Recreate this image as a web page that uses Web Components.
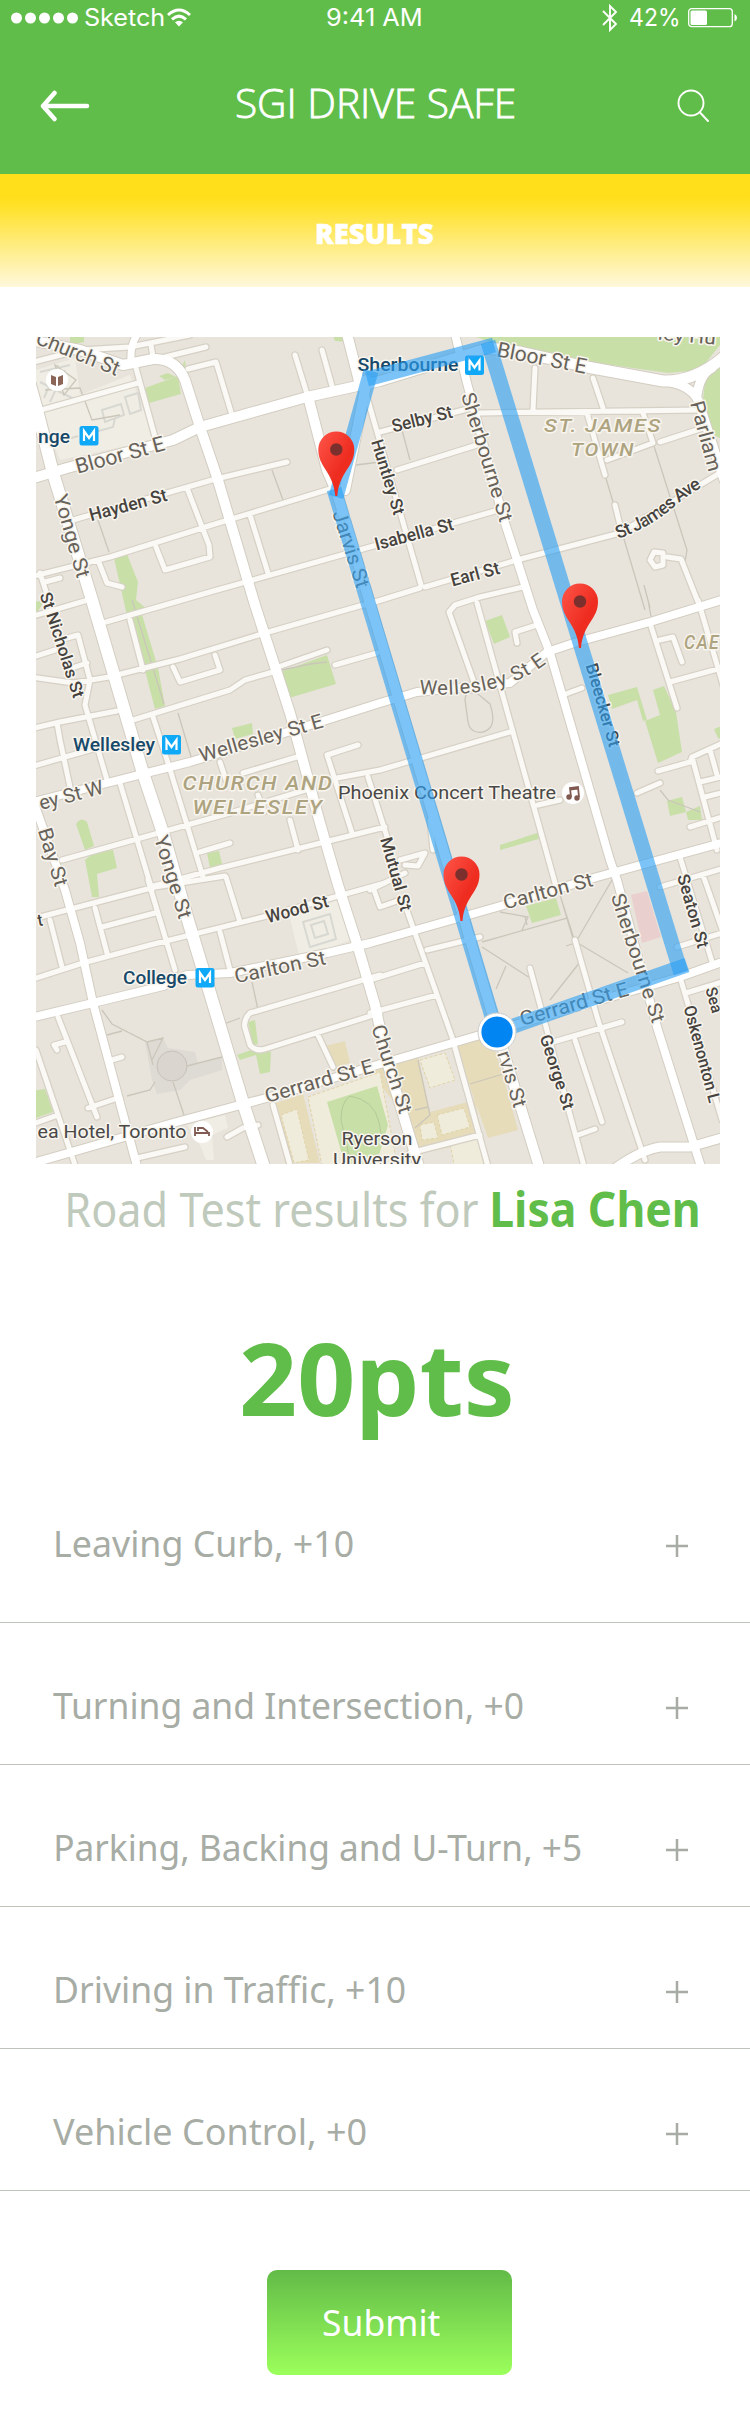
<!DOCTYPE html>
<html lang="en">
<head>
<meta charset="utf-8">
<title>SGI Drive Safe</title>
<style>
  html, body { margin: 0; background: #fff; }
  body { font-family: "Noto Sans", "Open Sans", sans-serif; }
</style>
</head>
<body>
<results-page></results-page>
<script>
const define = (name, html, after) => customElements.define(name, class extends HTMLElement {
  connectedCallback() {
    if (this.shadowRoot) return;
    this.attachShadow({ mode: 'open' }).innerHTML = html;
    if (after) after.call(this, this.shadowRoot);
  }
});

/* A single line of text condensed or expanded to an exact ink width. */
define('fit-text', `<style>
  :host { display: block; white-space: nowrap; flex: none; }
  span { display: inline-block; transform-origin: 0 50%; }
</style><span><slot></slot></span>`, function (root) {
  const w = +this.getAttribute('w');
  const c = document.createElement('canvas').getContext('2d');
  c.font = getComputedStyle(this).font;
  const m = c.measureText(this.textContent);
  const s = w / (m.actualBoundingBoxLeft + m.actualBoundingBoxRight);
  this.style.width = w + 'px';
  root.querySelector('span').style.transform =
    `translateX(${m.actualBoundingBoxLeft * s}px) scaleX(${s})`;
});

define('status-bar', `<style>
  :host { display: flex; height: 36px; align-items: center; padding: 0 13px 0 11px; box-sizing: border-box;
    font: 400 24px/36px Inter, sans-serif; color: #fff; }
  div { display: flex; align-items: center; flex: 1; }
  .r { justify-content: flex-end; }
  svg { display: block; flex: none; }
</style>
<div>
  <svg width="67" height="36" fill="#fff"><circle cx="5.5" cy="18" r="5.5"/><circle cx="19.5" cy="18" r="5.5"/><circle cx="33.5" cy="18" r="5.5"/><circle cx="47.5" cy="18" r="5.5"/><circle cx="61.5" cy="18" r="5.5"/></svg>
  <fit-text w="79" style="margin-left:7px">Sketch</fit-text>
  <svg width="24" height="36" viewBox="0 0 24 36" style="margin-left:3px" fill="none" stroke="#fff" stroke-width="3"><path d="M1 15Q12 5 23 15M5 19.300Q12 13 19 19.300"/><path d="M8 22.300Q12 19 16 22.300L12 26.500Z" fill="#fff" stroke="none"/></svg>
</div>
<fit-text w="94">9:41 AM</fit-text>
<div class="r">
  <svg width="16" height="28" viewBox="0 0 16 28" fill="none" stroke="#fff" stroke-width="1.900"><path d="M1 7L14 20L8 26V2L14 8L1 21"/></svg>
  <fit-text w="48" style="margin:0 10px 0 12px">42%</fit-text>
  <svg width="49" height="20" viewBox="0 0 49 20"><rect x=".7" y=".7" width="43.600" height="18" rx="3" fill="none" stroke="#fff" stroke-width="1.300"/><rect x="2.500" y="2.500" width="16.500" height="14.500" rx="1.500" fill="#fff"/><path d="M46.500 6Q49 7 49 9.700T46.500 13.500Z" fill="#fff"/></svg>
</div>`);

define('app-header', `<style>
  :host { display: block; height: 174px; background: #61bd49; color: #fff; }
  nav { display: grid; grid-template-columns: 1fr auto 1fr; align-items: center; height: 136px; padding: 0 40px; }
  fit-text { font: 300 40px/60px "Open Sans", sans-serif; -webkit-text-stroke: .8px #fff; margin-top: -3px; }
  svg { display: block; fill: none; stroke: #fff; stroke-linecap: round; stroke-linejoin: round; }
  .s { justify-self: end; margin: 2px 1px 0 0; }
</style>
<status-bar></status-bar>
<nav>
  <svg width="50" height="32" viewBox="0 0 50 32" stroke-width="4.500" style="margin-top:3px"><path d="M47 16H3M14.500 3L3 16L14.500 29"/></svg>
  <fit-text w="277">SGI DRIVE SAFE</fit-text>
  <svg class="s" width="32" height="33" viewBox="0 0 32 33" stroke-width="1.900"><circle cx="14" cy="14" r="12.500"/><path d="M23 23.500L31 32"/></svg>
</nav>`);

define('result-banner', `<style>
  :host { display: flex; height: 113px; justify-content: center; align-items: center; box-sizing: border-box; padding-top: 4px;
    background: linear-gradient(#ffdf1b 0%, #ffdf1b 20%, #ffe128 28%, #fff8dc 100%);
    font: 800 29px/36px "Open Sans", sans-serif; color: #fff; }
  fit-text { -webkit-text-stroke: .5px #fff; }
</style><fit-text w="116">RESULTS</fit-text>`);

/* ---------- street map ---------- */
const MAJOR = [
  [12, 'M30 385L37 410L53 473L92 600L142 770L163 833L187 917L210 993L243 1103L265 1170'],
  [10, 'M30 340L80 350L123 365L153 359Q176 358 185 380L200 427L217 477L255 605L290 713L320 823L338 885L358 947L375 1005L387 1062L420 1170'],
  [10, 'M30 479L67 468L173 440L200 427L307 397L380 381L488 348'],
  [11, 'M488 348L520 352L587 367L663 381Q695 382 725 356'],
  [9, 'M663 381Q690 384 698 400L724 480M697 395Q700 374 712 368'],
  [10, 'M346 330L360 385M309 400L327 470L337 493L497 1030L540 1170M367 380L345 490'],
  [8, 'M454 330L467 383L503 517L517 560L533 610L550 653L610 860L617 880L657 1027L702 1170'],
  [8, 'M30 803L107 783L190 762L320 722L380 703L417 692L510 683L547 652L577 642L650 622L725 599'],
  [8, 'M30 1018L93 1003L163 986L187 975L230 973L327 953L370 943L497 907L597 877L725 842'],
  [8, 'M30 1164L173 1123L270 1097L370 1067L480 1035L680 977L725 961'],
  [8, 'M33 800L65 890L80 943L93 1003L138 1170'],
  [9, 'M610 1172Q640 1150 660 1147L690 1147L725 1137'],
  [7, 'M131 362Q130 345 137 335']
];
const MINOR = 'M30 363L80 350L130 347L190 335M153 357L151 345M165 357L206 347M30 413L138 383M136 368L155 437M188 369L216 362L231 412M295 355L307 394M322 350L332 386M73 520L212 480L287 462M187 488L209 545L210 557L165 570L156 547M30 577L110 557L215 524L330 489M250 515L268 573M106 622L210 592L377 545L495 511M98 560L107 583L122 587M40 573L52 610M45 582L60 578M30 617L88 600M130 620L143 670M30 677L73 683L109 677L180 659L265 633L363 605M173 667L180 682L220 670L215 655M278 667L327 650M335 665L377 653M30 729L60 722L117 711M133 720L230 690L245 680L273 672M30 658L55 650M60 640L78 635L90 680L85 705L107 780M72 668L87 663M57 723L60 740L70 787M30 767L97 748M153 717L168 763L203 877M120 783L152 890M62 860L180 827L230 813L312 788M200 852L230 843M150 887L220 868L385 827M243 773L297 757M220 762L226 780M290 820L298 850M258 795L264 812M358 745L327 755L352 833M337 778L380 770L510 732M368 777L388 840M226 877L240 922M475 685L449 612L455 605L480 597L523 587M477 603L557 890M537 625L515 632L517 643M563 695L582 688M538 805L560 800M650 623L677 708M660 640L673 637L682 662M670 682L725 667M698 600L725 692M658 771L690 762L692 757L725 742M637 793L660 783M692 757L717 850M710 750L717 775M700 782L725 776M705 797L725 792M690 827L725 816M370 890L405 873M680 857L713 965M660 887L725 868M703 875L725 938M405 905L452 1037L489 1170M427 950L480 937M370 980L425 963M370 1013L437 995M530 968L585 1170M578 1135L595 1129M553 1042L622 1022M575 1040L602 1122M598 1020L645 1160M598 1020L575 940M680 977L722 1120M686 993L725 981M677 947L725 932M410 1153L480 1135M480 413L700 410M535 368L533 410M593 378L603 408M587 413L605 475M643 413L653 443L607 460M660 442L703 428M615 505L622 533M365 605L420 588M425 587L517 560L620 533L720 473M380 432L475 407M397 470L477 445M365 390L421 585M667 557L681 559L700 607M663 553L654 552L650 560L655 567L663 565ZM40 917L155 887L225 876M30 980L83 963L150 945L263 917L385 883M50 920L62 967M95 908L107 953M102 927L155 913M148 880L175 970M220 932L230 970M380 975L250 1013Q243 1020 245 1028L250 1045Q256 1052 265 1049L380 1013M317 1033L333 1067M58 1017L97 1117M65 1042L54 1045L57 1050M88 1108L118 1098M112 1060L122 1057M36 1050L75 1165M30 1125L58 1115M227 1137L243 1128L258 1125M137 1158L185 1147M273 1105L290 1165M374 890L380 907L400 900M430 820L433 850M400 860L425 853L418 866L405 865';
const PATHS = 'M272 470L283 500M98 520L109 552M402 430L410 460M356 465L380 462M605 475L645 610M653 443L687 550L685 562M178 713L192 760M465 700Q465 690 478 694L490 704Q498 728 483 732Q470 734 468 722ZM102 1010L112 1024L147 1042L153 1065M147 1042L163 1038L152 1060M107 1035L122 1031M187 1066L222 1057M173 1082L184 1115M155 1082L150 1090L127 1096M252 982L258 1010M224 1024L240 1018M482 942L567 918L585 975M482 947L530 978M506 966L496 989M560 895L592 995L600 1020M550 1000L580 962L563 905M576 942L628 973M577 940L612 880M566 946L578 942M500 912L528 917L522 930M525 917L527 925M650 608L644 585M652 622L648 600M660 790L668 800L700 812M132 600L152 665L164 704M282 670L310 664L327 662M418 1060L430 1115L415 1128M470 1084L503 1074M415 1110L428 1107M45 390L80 388L92 420L120 415M55 365L76 380L64 395Z';
const PARKS = ['84 330 84 342 70 345 70 330', '145 388 178 376 181 394 149 403', '159 376 168 373 176 377 165 380', '114 558 127 554 138 582 136 600 148 610 128 620', '130 610 140 608 158 668 165 706 155 709 150 690', '280 672 327 655 336 684 289 698', '232 728 252 723 253 734 235 739', '94 852 113 850 117 868 97 874 99 897 92 897 85 860', '207 853 219 851 223 868 211 873', '485 621 502 615 510 637 494 644', '608 695 637 687 647 720 643 721 637 700 612 709', '653 690 664 686 676 712 682 752 658 763 645 721 660 715', '500 845 540 832 542 838 500 850', '667 801 682 797 686 812 700 806 702 820 688 820 686 812 670 816', '526 906 556 898 561 915 532 923', '248 1022 255 1020 258 1044 253 1045', '237 1055 257 1048 271 1052 270 1072 260 1074 256 1055 240 1060', '30 1091 45 1089 53 1112 36 1118', '455 330 720 330 720 345 700 370 668 373 590 362 500 345', '705 380 720 365 720 438 713 435 703 400', '714 729 722 726 722 739 718 738', '30 603 45 600 36 614', '331 330 357 330 348 342 335 341', '185 360 186 370 182 366'];
const M = '#67625a', D = '#46433f', A = '#ada380', B = '#17496a', P = '#4a4847';
/* text, centre x, centre y, angle, length, size, colour */
const LABELS = [
  ['Church St', 78, 353, 22, 88, 21, M], ['Bloor St E', 120, 455, -15, 92, 21, M], ['Hayden St', 128, 505, -15, 80, 18, D],
  ['Yonge St', 72, 536, 74, 86, 20, M], ['St Nicholas St', 62, 645, 72, 110, 17, D], ['Jarvis St', 351, 549, 72, 80, 20, M],
  ['Bloor St E', 542, 358, 11, 91, 21, M], ['Selby St', 422, 419, -14, 62, 18, D], ['Huntley St', 388, 477, 73, 78, 17, D],
  ['Sherbourne St', 487, 457, 73, 134, 20, M], ['Isabella St', 414, 534, -15, 81, 18, D], ['Earl St', 475, 574, -15, 50, 18, D],
  ['Parliam', 706, 436, 75, 72, 20, M], ['Wellesley St E', 261, 738, -16, 128, 20, M], ['ey St W', 71, 795, -15, 66, 20, M],
  ['Bay St', 53, 857, 73, 60, 20, M], ['Yonge St', 173, 877, 73, 86, 20, M], ['Bleecker St', 603, 705, 74, 86, 17, D],
  ['Mutual St', 396, 874, 74, 76, 17, D], ['Carlton St', 548, 891, -15, 92, 20, M], ['Wood St', 297, 909, -15, 64, 18, D],
  ['Carlton St', 280, 967, -12, 93, 20, M], ['Gerrard St E', 319, 1081, -16, 112, 20, M], ['Church St', 392, 1069, 72, 92, 20, M],
  ['rvis St', 512, 1079, 73, 58, 20, M], ['Gerrard St E', 574, 1004, -16, 112, 20, M], ['George St', 557, 1072, 72, 78, 17, D],
  ['Sherbourne St', 638, 958, 72, 135, 20, M], ['Seaton St', 693, 911, 74, 76, 17, D], ['Oskenonton L', 702, 1054, 75, 100, 17, D],
  ['Sea', 714, 1000, 74, 26, 16, D], ['t', 40, 920, -10, 5, 17, D],
  ['ST. JAMES', 603, 426, 0, 118, 19, A], ['TOWN', 603, 450, 0, 64, 19, A], ['CHURCH AND', 258, 783, 0, 151, 20, A],
  ['WELLESLEY', 258, 807, 0, 131, 20, A], ['CAE', 702, 642, 0, 36, 20, A],
  ['nge', 54, 437, 0, 32, 19, B], ['Sherbourne', 408, 365, 0, 101, 18, B], ['Wellesley', 114, 745, 0, 82, 19, B], ['College', 155, 978, 0, 64, 19, B],
  ['Phoenix Concert Theatre', 447, 793, 0, 218, 19, P], ['ea Hotel, Toronto', 112, 1132, 0, 149, 19, P],
  ['Ryerson', 377, 1139, 0, 71, 19, P], ['University', 377, 1160, 0, 88, 18, P], ['ley Hu', 687, 336, 5, 58, 18, M]
];
const label = ([t, x, y, r, len, s, c]) =>
  `<text transform="translate(${x} ${y}) rotate(${r})" y="${s * .34}" textLength="${len}" lengthAdjust="spacingAndGlyphs" font-size="${s}" fill="${c}"${c === M || c === P ? ' font-weight="400"' : ''}${c === A ? ' font-style="italic" letter-spacing="1.500"' : ''}>${t}</text>`;
const metro = (x, y) => `<g transform="translate(${x} ${y})"><rect width="19" height="19.500" rx="2.500" fill="#10a9f7"/><path d="M4.500 15V5L9.500 12L14.500 5V15" fill="none" stroke="#fff" stroke-width="2.200"/></g>`;
const pin = (x, y) => `<g transform="translate(${x} ${y})"><path d="M-1 46.500C-3 22-18 18-18 0A18 18 0 0 1 18 0C18 18 3 22 1 46.500Z" fill="url(#pin)"/><circle r="6.200" fill="#7b302d"/></g>`;

define('route-map', `<style>
  :host { display: block; width: 684px; height: 827px; margin: 50px 0 0 36px; }
  svg { display: block; }
  g.labels { font-family: Roboto, sans-serif; font-weight: 500; text-anchor: middle; paint-order: stroke; stroke: #f8f5ee; stroke-width: 3px; stroke-linejoin: round; }
  g.labels text[fill="${M}"], g.labels text[fill="${P}"] { paint-order: stroke; }
</style>
<svg width="684" height="827" viewBox="36 337 684 827">
  <defs>
    <linearGradient id="pin" x2="1" y2="1"><stop offset="0" stop-color="#ff5549"/><stop offset=".6" stop-color="#ee2c20"/></linearGradient>
    <path id="ave" d="M618 539Q650 527 670 510T706 485"/><path id="wel" d="M419 694Q500 700 548 662"/>
  </defs>
  <rect x="36" y="337" width="684" height="827" fill="#e8e4dc"/>
  <g fill="#f0ede4"><path d="M36 370L75 358L80 395L130 375L155 440L60 460L36 400ZM290 918L338 900L350 940L300 960ZM187 1125L225 1115L228 1128L212 1135L214 1160L206 1160L200 1145Z"/></g>
  <g fill="none" stroke="#d8d8d2" stroke-width="2"><path d="M102 410L121 404L124 415L105 422ZM125 397L138 393L141 410L130 414ZM95 432L113 427L115 418M303 922L330 914L336 939L310 947ZM311 925L324 921L328 934L315 938ZM40 372L70 365M40 382L76 400M50 402L65 370M58 365L44 398M65 440L78 436"/></g>
  <path d="M145 1042L163 1038L168 1048L195 1052L198 1064L222 1057L222 1070L190 1080L180 1090L157 1094L152 1080Z" fill="#dedad4"/>
  <g fill="#e6dcba"><path d="M325 1046L345 1041L350 1063L335 1067ZM370 1072L418 1056L430 1112L475 1100L483 1140L415 1155L400 1110ZM455 1045L490 1035L503 1075L518 1130L488 1138ZM276 1103L303 1094L320 1163L285 1163Z"/></g>
  <g fill="#f0ecdc" stroke="#e0d3a5" stroke-dasharray="3 2"><path d="M308 1097L380 1072L397 1165L322 1165ZM420 1060L445 1053L455 1080L430 1088ZM437 1115L464 1108L470 1127L442 1135ZM420 1125L434 1122L438 1138L422 1140ZM450 1143L478 1137L485 1170L455 1170ZM281 1115L297 1109L309 1160L294 1163Z"/></g>
  <path d="M327 1102L377 1086L388 1125L376 1165L345 1165Z" fill="#c8dfa8"/>
  <path d="M341 1120Q341 1102 350 1096Q374 1100 379 1122L382 1140M341 1120L350 1160" fill="none" stroke="#b6c99a"/>
  <path d="M631 895L647 891L661 937L642 943Z" fill="#eacfcf"/>
  <g fill="#c8dfa8">${PARKS.map(p => `<polygon points="${p}"/>`).join('')}<path d="M76 824Q81 816 87 822L94 846L85 850Z"/></g>
  <path d="${PATHS}" fill="none" stroke="#cbc6ba" stroke-width="1.300"/>
  <circle cx="172" cy="1066" r="15" fill="#dad6cf" stroke="#c7c2b8"/>
  <g fill="none" stroke-linecap="round" stroke-linejoin="round">
    <path d="${MINOR}" stroke="#d6d0c5" stroke-width="7.500"/>
    ${MAJOR.map(([w, d]) => `<path d="${d}" stroke="#d3cdc1" stroke-width="${w + 2}"/>`).join('')}
    <path d="${MINOR}" stroke="#faf9f5" stroke-width="5"/>
    ${MAJOR.map(([w, d]) => `<path d="${d}" stroke="#fff" stroke-width="${w}"/>`).join('')}
  </g>
  <g class="labels">${LABELS.map(label).join('')}
  <text font-size="18" fill="${D}" style="text-anchor:start"><textPath href="#ave" textLength="99">St James Ave</textPath></text>
  <text font-size="20" font-weight="400" fill="${M}" style="text-anchor:start"><textPath href="#wel" textLength="134">Wellesley St E</textPath></text></g>
  ${metro(79.5, 426)}${metro(465, 355.5)}${metro(162, 735)}${metro(195.5, 968)}
  <g fill="#fff"><circle cx="57" cy="380" r="11"/><circle cx="573" cy="793" r="11"/><circle cx="202" cy="1132" r="11"/></g>
  <path d="M51 375L56 377V386L51 384ZM58 377L63 375V384L58 386Z" fill="#8a6558"/>
  <g stroke="#805a50" stroke-width="1.800" fill="#805a50"><path d="M571 797L570 788L578 787L579 797M570 789.500L578 788.500" fill="none"/><circle cx="569" cy="797" r="1.800"/><circle cx="577" cy="798" r="1.800"/><path d="M195 1127V1136M195 1133H209V1136M198 1131V1128H203L208 1132" fill="none"/></g>
  <g stroke="#2ba0f3" stroke-opacity=".62" stroke-width="15" fill="none">
    <path d="M371 371L336 497"/><path d="M334 489L496 1030"/><path d="M505 1029L687 965"/><path d="M681 973L488 342"/><path d="M494 345L367 379"/>
  </g>
  ${pin(336.3, 449.5)}${pin(580, 601.5)}${pin(461.5, 874.5)}
  <circle cx="497" cy="1032" r="19" fill="#fff" stroke="#ccc" stroke-width="1"/><circle cx="497" cy="1032" r="15.600" fill="#0085f2"/>
</svg>`);

define('score-summary', `<style>
  :host { display: block; }
  p { display: flex; align-items: center; justify-content: space-between; margin: 0; padding: 14.500px 52px 0 67.500px; height: 60px; font-size: 47.500px; line-height: 60px; color: #bfcabc; }
  b, .score { color: #61bd49; font-weight: 700; }
  .score { margin: 78px 0 0 242px; font-size: 101px; line-height: 120px; height: 119px; }
</style>
<p><fit-text w="410">Road Test results for</fit-text><b><fit-text w="205">Lisa Chen</fit-text></b></p>
<fit-text class="score" w="269">20pts</fit-text>`);

define('result-row', `<style>
  :host { display: flex; align-items: center; box-sizing: border-box; height: 142px; padding: 57px 62px 34px 55.500px;
    border-bottom: 1px solid #bfc4ba; font-size: 37px; line-height: 50px; color: #a7aca5; }
  svg { margin-left: auto; margin-top: 6px; }
</style><svg width="22" height="22" stroke="#a7aca5" stroke-width="2.500"><path d="M0 11H22M11 0V22"/></svg>`, function (root) {
  const t = document.createElement('fit-text');
  t.setAttribute('w', this.getAttribute('w'));
  t.textContent = this.getAttribute('label');
  root.querySelector('svg').before(t);
});

define('submit-button', `<style>
  :host { display: block; margin: 79px 0 0 267px; }
  button { display: flex; align-items: center; box-sizing: border-box; width: 245px; height: 105px; margin: 0; padding: 0 0 0 56px; border: 0; border-radius: 10px;
    background: linear-gradient(#62bb48, #9bff5b); color: #fff; font: 400 37px/50px "Noto Sans", sans-serif; }
</style><button><fit-text w="117">Submit</fit-text></button>`);

define('results-page', `<style>
  :host { display: block; width: 750px; height: 2428px; overflow: hidden; background: #fff; }
  .first { height: 187px; padding-top: 82px; padding-bottom: 54px; }
  .wide { padding-left: 53px; }
</style>
<app-header></app-header>
<result-banner></result-banner>
<route-map></route-map>
<score-summary></score-summary>
<result-row class="first" label="Leaving Curb, +10" w="297"></result-row>
<result-row class="wide" label="Turning and Intersection, +0" w="470"></result-row>
<result-row label="Parking, Backing and U-Turn, +5" w="525"></result-row>
<result-row label="Driving in Traffic, +10" w="349"></result-row>
<result-row class="wide" label="Vehicle Control, +0" w="313"></result-row>
<submit-button></submit-button>`);
</script>
</body>
</html>
